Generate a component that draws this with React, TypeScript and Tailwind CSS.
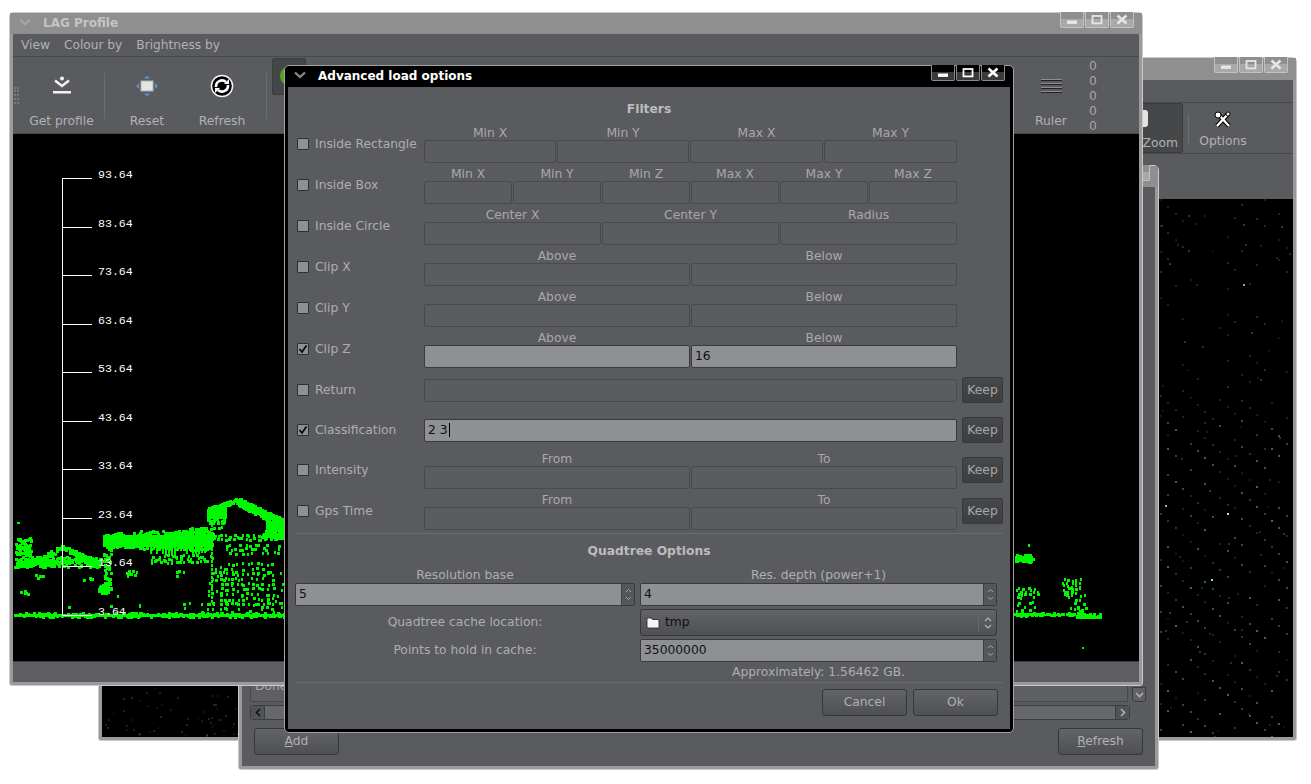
import React from "react";

function makeRng(seed: number) {
  let s = seed;
  return () => {
    s = (s * 1664525 + 1013904223) >>> 0;
    return s / 4294967296;
  };
}

const rects: string[] = [];
const rng = makeRng(42);
function r(x: number, y: number, w: number, h: number) {
  rects.push(`M${x.toFixed(0)} ${y.toFixed(0)}h${w.toFixed(0)}v${h.toFixed(0)}h${(-w).toFixed(0)}z`);
}
function blob(x1: number, y1: number, x2: number, y2: number, n: number, size = 3) {
  for (let i = 0; i < n; i++) r(x1 + rng() * (x2 - x1), y1 + rng() * (y2 - y1), size, size);
}
function band(x1: number, y1: number, x2: number, y2: number, t: number, n: number) {
  for (let i = 0; i < n; i++) {
    const k = rng();
    r(x1 + (x2 - x1) * k, y1 + (y2 - y1) * k + (rng() - 0.5) * t, 3, 3);
  }
}
function grid(x1: number, y1: number, x2: number, y2: number, dx: number, dy: number, p: number) {
  for (let y = y1; y < y2; y += dy)
    for (let x = x1; x < x2; x += dx) if (rng() < p) r(x + rng() * 2, y + rng() * 2, 2 + Math.round(rng()), 3);
}
// left canvas
r(14, 614, 270, 3);
band(14, 614, 284, 614, 4, 220);
blob(14, 537, 30, 555, 70);
blob(14, 556, 100, 566, 200);
band(28, 564, 62, 546, 5, 60);
band(62, 546, 100, 564, 5, 60);
blob(14, 590, 28, 593, 6);
blob(34, 574, 46, 578, 4);
blob(80, 577, 92, 580, 4);
r(17, 522, 3, 2);
r(103, 535, 110, 12);
blob(103, 532, 140, 547, 110);
blob(140, 530, 190, 548, 200);
blob(188, 527, 212, 549, 150);
for (let x = 150; x < 206; x += 3) r(x, 546, 2, 4 + Math.round(rng() * 6));
grid(150, 554, 212, 562, 4, 3, 0.9);
blob(103, 548, 110, 590, 46);
blob(98, 584, 107, 592, 50);
grid(122, 570, 136, 576, 3, 3, 0.7);
grid(175, 570, 184, 575, 3, 3, 0.6);
band(207, 509, 237, 500, 5, 60);
r(207, 509, 20, 10);
blob(207, 518, 224, 522, 24);
band(237, 501, 284, 523, 8, 190);
r(266, 521, 18, 11);
blob(262, 528, 284, 537, 50);
grid(208, 525, 226, 528, 4, 3, 0.8);
grid(208, 534, 284, 540, 4, 3, 0.95);
grid(225, 543, 280, 552, 4, 4, 0.7);
for (let y = 520; y < 604; y += 4) r(211, y, 2, 3);
grid(207, 562, 224, 610, 4, 4, 0.6);
grid(226, 562, 272, 603, 5, 5, 0.9);
grid(225, 570, 284, 612, 5, 6, 0.4);
grid(170, 602, 284, 612, 6, 4, 0.4);
r(117, 595, 2, 3);
r(68, 606, 3, 3);
r(139, 604, 2, 4);
r(110, 605, 3, 3);
// right canvas
r(1014, 613, 30, 3);
r(1044, 614, 20, 2);
r(1076, 616, 26, 3);
blob(1014, 612, 1100, 615, 60);
r(1015, 556, 14, 6);
blob(1015, 554, 1032, 561, 60);
r(1028, 544, 2, 3);
grid(1016, 586, 1040, 594, 4, 3, 0.85);
grid(1016, 596, 1038, 612, 4, 4, 0.65);
grid(1062, 578, 1080, 595, 4, 3, 0.9);
grid(1068, 594, 1084, 607, 5, 4, 0.7);
blob(1076, 606, 1082, 615, 8);
r(1082, 647, 2, 2);
const greenPath = rects.join("");

const starRng = makeRng(7);
const stars: { x: number; y: number; o: number }[] = [];
for (let k = -70; k < 40; k++) {
  for (let i = 0; i < 90; i++) {
    const x = 1160 + i * 7.4;
    const y = 200 + k * 24 + i * 7.4 * 0.95 + (k % 3) * 2;
    const op = starRng();
    if (x > 1293 || y < 200 || y > 738) continue;
    if (op < (y > 400 ? 0.2 : 0.6)) continue;
    stars.push({ x: Math.round(x), y: Math.round(y), o: 0.1 + (y > 420 ? 0.32 : 0.1) * starRng() });
  }
}
for (let i = 0; i < 60; i++) {
  stars.push({ x: Math.round(1160 + starRng() * 133), y: Math.round(200 + starRng() * 538), o: 0.08 + starRng() * 0.18 });
}
stars.push({ x: 1227, y: 514, o: 1 }, { x: 1211, y: 580, o: 0.9 }, { x: 1165, y: 506, o: 0.8 }, { x: 1243, y: 285, o: 0.7 });
for (let i = 0; i < 60; i++) {
  stars.push({ x: Math.round(103 + starRng() * 136), y: Math.round(688 + starRng() * 50), o: 0.05 + starRng() * 0.12 });
}

function Caret({ color }: { color: string }) {
  return (
    <svg width="12" height="8" viewBox="0 0 12 8">
      <path d="M1 1.5 6 6 11 1.5" fill="none" stroke={color} strokeWidth="2.2" />
    </svg>
  );
}

function Glyph({ kind, color }: { kind: "min" | "max" | "close"; color: string }) {
  if (kind === "min")
    return (
      <svg width="12" height="12" viewBox="0 0 12 12">
        <rect x="1" y="6.500" width="10" height="3.400" fill={color} />
      </svg>
    );
  if (kind === "max")
    return (
      <svg width="12" height="12" viewBox="0 0 12 12">
        <rect x="1.500" y="2" width="9" height="7.400" fill="none" stroke={color} strokeWidth="1.800" />
      </svg>
    );
  return (
    <svg width="12" height="12" viewBox="0 0 12 12">
      <path d="M1.500 1.500 10.500 9.500M10.500 1.500 1.500 9.500" fill="none" stroke={color} strokeWidth="2.600" />
    </svg>
  );
}

function TitleButtons({ dark }: { dark?: boolean }) {
  const kinds: ("min" | "max" | "close")[] = ["min", "max", "close"];
  return (
    <div className="flex gap-px -mt-px">
      {kinds.map((k) => (
        <div
          key={k}
          className={
            dark
              ? "w-[24px] h-[16px] flex items-center justify-center rounded-b-[2px] border-x border-b border-[#8a8a8a] bg-gradient-to-b from-[#000000] from-45% to-[#3a3a3a] to-45%"
              : "w-[24px] h-[16px] flex items-center justify-center rounded-b-[2px] border-x border-b border-[#c2c2c2] bg-gradient-to-b from-[#8f8f8f] from-45% to-[#a9a9a9] to-45%"
          }
        >
          <Glyph kind={k} color={dark ? "#ffffff" : "#e6e6e6"} />
        </div>
      ))}
    </div>
  );
}

function ToolItem({ icon, label, w }: { icon: React.ReactNode; label: string; w: string }) {
  return (
    <div className={`${w} h-full flex flex-col items-center shrink-0`}>
      <div className="h-[57px] flex items-center justify-center">{icon}</div>
      <div className="text-[12.300px] leading-[14px] text-[#b2b2b2] whitespace-nowrap">{label}</div>
    </div>
  );
}

function Sep() {
  return <div className="w-px h-[46px] mt-[16px] bg-[#6c6d70] shrink-0" />;
}

function Field({ on, children }: { on?: boolean; children?: React.ReactNode }) {
  return (
    <div
      className={
        on
          ? "h-[23px] rounded-[2px] border border-[#393a3c] bg-[#8e9093] px-[3px] text-[#101010] text-[12.300px] leading-[21px] min-w-0 text-left"
          : "h-[23px] rounded-[2px] border border-[#494a4d] bg-[#5b5c5f] min-w-0"
      }
    >
      {children}
    </div>
  );
}

function Check({ on }: { on?: boolean }) {
  return (
    <div className="w-[12px] h-[12px] shrink-0 rounded-[1px] border border-[#2e2f31] bg-[#8e9093] flex items-center justify-center">
      {on && (
        <svg width="10" height="10" viewBox="0 0 10 10">
          <path d="M1.500 5 4 8 8.500 1.500" fill="none" stroke="#0a0a0a" strokeWidth="1.800" />
        </svg>
      )}
    </div>
  );
}

function KeepButton() {
  return (
    <div className="w-[41px] h-[26px] ml-[5px] shrink-0 rounded-[2px] border border-[#38393b] bg-gradient-to-b from-[#47484a] to-[#3d3e40] flex items-center justify-center text-[12.300px] text-[#a8a8a8]">
      Keep
    </div>
  );
}

type RowProps = {
  label: string;
  on?: boolean;
  cols?: string;
  heads?: string[];
  values?: (string | null)[];
  keep?: boolean;
  top: string;
  enabled?: boolean;
  children?: React.ReactNode;
};

function FilterRow({ label, on, cols, heads, values, keep, top, enabled, children }: RowProps) {
  return (
    <div className={`flex items-center ${top}`}>
      <div className="w-[129px] pl-[2px] flex items-center gap-[6px] shrink-0">
        <Check on={on} />
        <span className="text-[12.300px] text-[#aeaeae] whitespace-nowrap">{label}</span>
      </div>
      <div className="w-[533px] shrink-0">
        {heads ? (
          <div className={`grid gap-px ${cols}`}>
            {heads.map((h, i) => (
              <div key={i} className="min-w-0">
                <div className="h-[15px] text-[12.300px] leading-[17px] text-[#a9a9a9] text-center">{h}</div>
                <Field on={enabled}>{values?.[i]}</Field>
              </div>
            ))}
          </div>
        ) : (
          children
        )}
      </div>
      {keep && <KeepButton />}
    </div>
  );
}

function Spin({ value }: { value: string }) {
  return (
    <div className="h-[23px] flex rounded-[2px] border border-[#393a3c] overflow-hidden text-left">
      <div className="flex-1 px-[3px] text-[12.300px] leading-[21px] text-[#101010] bg-[#8e9093]">{value}</div>
      <div className="w-[13px] border-l border-[#3f4042] bg-[#55565a] flex flex-col items-center justify-center gap-[3px]">
        <svg width="7" height="5" viewBox="0 0 7 5">
          <path d="M1 4 3.500 1.500 6 4" fill="none" stroke="#a4a4a4" />
        </svg>
        <svg width="7" height="5" viewBox="0 0 7 5">
          <path d="M1 1 3.500 3.500 6 1" fill="none" stroke="#a4a4a4" />
        </svg>
      </div>
    </div>
  );
}

function PushButton({ children, w, className = "" }: { children: React.ReactNode; w: string; className?: string }) {
  return (
    <div
      className={`${w} h-[27px] rounded-[3px] border border-[#36373a] bg-gradient-to-b from-[#636467] to-[#4f5053] flex items-center justify-center text-[12.300px] text-[#b0b0b0] ${className}`}
    >
      {children}
    </div>
  );
}

const WINDOW =
  "absolute rounded-t-[5px] rounded-b-[3px] border border-[#c9c9c9] bg-[#9a9a9a] flex flex-col px-[3px] pb-[3px]";

function BackWindow() {
  return (
    <div className={`${WINDOW} left-[98px] top-[57px] w-[1199px] h-[684px]`}>
      <div className="h-[22px] shrink-0 flex justify-end pr-[8px] bg-[#8f8f8f] -mx-[3px]">
        <TitleButtons />
      </div>
      <div className="h-[23px] shrink-0 bg-[#5a5b5e] border-b border-[#47484a]" />
      <div className="h-[51px] shrink-0 bg-[#5a5b5e] border-b border-[#47484a] flex justify-end pr-[36px]">
        <div className="w-[44px] h-[50px] rounded-[2px] bg-[#464749] border border-[#3b3c3e] flex flex-col items-end pr-[4px] text-[12.300px] text-[#b2b2b2] relative">
          <div className="absolute left-[3px] top-[6px] w-[5px] h-[17px] rounded-r-[3px] bg-[#e4e4e4]" />
          <span className="mt-[30px]">Zoom</span>
        </div>
        <div className="w-px h-[30px] mt-[12px] ml-[5px] bg-[#6c6d70]" />
        <div className="w-[68px] flex flex-col items-center">
          <svg className="mt-[8px]" width="18" height="18" viewBox="0 0 18 18">
            <path d="M3 15 14 3M4 3l11 12" stroke="#000" strokeWidth="4.500" />
            <path d="M3 15 14 3M5 4l10 11" stroke="#fff" strokeWidth="2.400" />
            <circle cx="4" cy="4" r="3" fill="#fff" stroke="#000" />
            <circle cx="14" cy="3" r="2" fill="#fff" stroke="#000" />
          </svg>
          <span className="text-[12.300px] leading-[14px] text-[#b2b2b2] mt-[5px]">Options</span>
        </div>
      </div>
      <div className="h-[45px] shrink-0 bg-[#5a5b5e]" />
      <div className="flex-1 bg-black relative overflow-hidden">
        <svg className="absolute inset-0 w-full h-full" viewBox="102 200 1191 538">
          {stars.map((s, i) => (
            <rect key={i} x={s.x} y={s.y} width={2} height={2} fill="#a8ecea" opacity={s.o} />
          ))}
        </svg>
      </div>
    </div>
  );
}

function MiddleWindow() {
  return (
    <div className={`${WINDOW} left-[238px] top-[165px] w-[921px] h-[605px]`}>
      <div className="h-[21px] shrink-0 bg-[#8f8f8f] -mx-[3px] flex justify-end pr-[8px]">
        <TitleButtons />
      </div>
      <div className="flex-1 bg-[#5a5b5e] flex flex-col min-h-0 pl-[8px] pr-[8px] relative">
        <div className="flex-1 flex min-h-0">
          <div className="flex-1 flex flex-col justify-end min-w-0">
            <div className="h-[24px] border border-[#47484a] bg-[#5e5f62] text-[12.300px] leading-[14px] text-[#a9a9a9] pl-[4px] mr-[4px] overflow-hidden">
              Done
            </div>
          </div>
          <div className="w-[14px] mr-[1px] flex flex-col justify-end">
            <div className="h-[15px] rounded-b-[3px] border border-[#3c3d3f] bg-[#606164] flex items-center justify-center">
              <svg width="9" height="6" viewBox="0 0 9 6">
                <path d="M1 1 4.500 4.500 8 1" fill="none" stroke="#b0b0b0" strokeWidth="1.600" />
              </svg>
            </div>
          </div>
        </div>
        <div className="mt-[3px] h-[15px] mr-[17px] flex rounded-[3px] border border-[#3c3d3f] bg-[#67686b] shrink-0">
          <div className="w-[14px] border-r border-[#3c3d3f] bg-[#525356] flex items-center justify-center">
            <svg width="6" height="9" viewBox="0 0 6 9">
              <path d="M5 1 1.500 4.500 5 8" fill="none" stroke="#111" strokeWidth="1.600" />
            </svg>
          </div>
          <div className="flex-1" />
          <div className="w-[14px] border-l border-[#3c3d3f] bg-[#525356] flex items-center justify-center">
            <svg width="6" height="9" viewBox="0 0 6 9">
              <path d="M1 1 4.500 4.500 1 8" fill="none" stroke="#b0b0b0" strokeWidth="1.600" />
            </svg>
          </div>
        </div>
        <div className="shrink-0 mt-[8px] mb-[11px] flex justify-between px-[4px]">
          <PushButton w="w-[85px]">
            <span>
              <span className="underline">A</span>dd
            </span>
          </PushButton>
          <PushButton w="w-[85px]">
            <span>
              <span className="underline">R</span>efresh
            </span>
          </PushButton>
        </div>
      </div>
    </div>
  );
}

function ProfileCanvas() {
  const ticks = ["93.64", "83.64", "73.64", "63.64", "53.64", "43.64", "33.64", "23.64", "13.64", "3.64"];
  return (
    <div className="flex-1 bg-black relative overflow-hidden">
      <svg className="absolute inset-0 w-full h-full" viewBox="13 134 1126 527">
        <path d={greenPath} fill="#00f800" />
        <path d="M62.500 178V615" stroke="#fff" strokeWidth="1" />
        {ticks.map((t, i) => {
          const y = Math.round(178 + i * 48.55) + 0.5;
          return (
            <g key={t}>
              <path d={`M62 ${y}H92`} stroke="#fff" strokeWidth="1" />
              <text x="98" y={y - 1} fill="#fff" fontSize="11.600" fontFamily="'Liberation Mono', monospace">
                {t}
              </text>
            </g>
          );
        })}
      </svg>
    </div>
  );
}

function FrontWindow() {
  return (
    <div className={`${WINDOW} left-[9px] top-[12px] w-[1134px] h-[674px]`}>
      <div className="h-[21px] shrink-0 bg-[#8f8f8f] -mx-[3px] flex items-start pl-[9px] pr-[8px]">
        <div className="mt-[5px]">
          <Caret color="#a6a6a6" />
        </div>
        <span className="ml-[12px] mt-[1px] text-[12px] font-bold text-[#c4c4c4]">LAG Profile</span>
        <div className="ml-auto">
          <TitleButtons />
        </div>
      </div>
      <div className="h-[23px] shrink-0 bg-[#5a5b5e] border-b border-[#47484a] flex items-center gap-[14px] pl-[8px] text-[12.200px] text-[#b2b2b2]">
        <span>View</span>
        <span>Colour by</span>
        <span>Brightness by</span>
      </div>
      <div className="h-[77px] shrink-0 bg-[#5a5b5e] border-b border-[#47484a] flex relative">
        <div className="w-[5px] ml-[1px] mt-[30px] h-[17px] border-l-2 border-r-2 border-dotted border-[#77787b] shrink-0" />
        <ToolItem
          w="w-[85px]"
          label="Get profile"
          icon={
            <svg width="20" height="20" viewBox="0 0 20 20">
              <circle cx="10" cy="2.500" r="2" fill="#f2f2f2" />
              <path d="M3 4.500 10 10 17 4.500" fill="none" stroke="#f2f2f2" strokeWidth="2.500" />
              <rect x="1" y="15" width="18" height="2.500" fill="#f2f2f2" />
            </svg>
          }
        />
        <Sep />
        <ToolItem
          w="w-[84px]"
          label="Reset"
          icon={
            <svg width="24" height="24" viewBox="0 0 24 24">
              <rect x="6" y="7" width="12" height="10" fill="#e6e6e0" stroke="#aeb4c0" />
              <path d="M12 1.500 15 4.500H9zM12 22.500 9 19.500h6zM1 12 4 9v6zM23 12l-3-3v6z" fill="#5a90e0" />
            </svg>
          }
        />
        <ToolItem
          w="w-[66px]"
          label="Refresh"
          icon={
            <svg width="24" height="24" viewBox="0 0 24 24">
              <circle cx="12" cy="12" r="11.300" fill="#f4f4f4" />
              <circle cx="12" cy="12" r="9.800" fill="#000" />
              <path d="M6 13a6 6 0 0 1 10-5M18 11a6 6 0 0 1-10 5" fill="none" stroke="#fff" strokeWidth="2.600" />
              <path d="M14 10h5V5zM10 14H5v5z" fill="#fff" />
            </svg>
          }
        />
        <div className="w-[11px] shrink-0" />
        <Sep />
        <div className="ml-[5px] w-[34px] h-[37px] mt-px rounded-[2px] bg-[#454648] border border-[#3b3c3e] overflow-hidden shrink-0">
          <div className="w-[20px] h-[20px] rounded-full bg-[#55a520] ml-[7px] mt-[7px]" />
        </div>
        <div className="ml-auto w-[60px] shrink-0">
          <ToolItem
            w="w-[60px]"
            label="Ruler"
            icon={
              <svg width="21" height="16" viewBox="0 0 21 16">
                <path d="M0 1.500H21M0 5.500H21M0 9.500H21M0 13.500H21" stroke="#8e8e8e" strokeWidth="1" />
                <path d="M0 2.500H21M0 6.500H21M0 10.500H21M0 14.500H21" stroke="#222" strokeWidth="1" />
              </svg>
            }
          />
        </div>
        <div className="w-[49px] ml-[8px] mr-px shrink-0 pt-[2px] text-[12.300px] leading-[15px] text-[#a8a8a8]">
          <div>0</div>
          <div>0</div>
          <div>0</div>
          <div>0</div>
          <div>0</div>
        </div>
      </div>
      <ProfileCanvas />
      <div className="h-[21px] shrink-0 bg-[#5d5e61] border-t border-[#3f4042]" />
    </div>
  );
}

function Dialog() {
  const two = "grid-cols-[266px_266px]";
  const four = "grid-cols-[132px_132px_133px_133px]";
  const six = "grid-cols-[88px_88px_88px_88px_88px_88px]";
  const three = "grid-cols-[177px_177px_177px]";
  return (
    <div className="absolute left-[284px] top-[65px] w-[730px] h-[668px] rounded-[5px] border border-[#a2a2a2] bg-black flex flex-col px-[3px] pb-[3px]">
      <div className="h-[21px] shrink-0 flex items-start pl-[6px] pr-[5px]">
        <div className="mt-[5px]">
          <Caret color="#8c8c8c" />
        </div>
        <span className="ml-[12px] mt-[1px] text-[12px] font-bold text-white">Advanced load options</span>
        <div className="ml-auto">
          <TitleButtons dark />
        </div>
      </div>
      <div className="flex-1 bg-[#5a5b5e] px-[7px] min-h-0">
        <div className="mt-[15px] h-[14px] text-[12.300px] leading-[14px] font-bold text-center text-[#bcbcbc]">Filters</div>
        <FilterRow top="mt-[9px]" label="Inside Rectangle" cols={four} heads={["Min X", "Min Y", "Max X", "Max Y"]} />
        <FilterRow top="mt-[3px]" label="Inside Box" cols={six} heads={["Min X", "Min Y", "Min Z", "Max X", "Max Y", "Max Z"]} />
        <FilterRow top="mt-[3px]" label="Inside Circle" cols={three} heads={["Center X", "Center Y", "Radius"]} />
        <FilterRow top="mt-[3px]" label="Clip X" cols={two} heads={["Above", "Below"]} />
        <FilterRow top="mt-[3px]" label="Clip Y" cols={two} heads={["Above", "Below"]} />
        <FilterRow top="mt-[3px]" label="Clip Z" on cols={two} heads={["Above", "Below"]} enabled values={[null, "16"]} />
        <FilterRow top="mt-[9px]" label="Return" keep>
          <Field />
        </FilterRow>
        <FilterRow top="mt-[14px]" label="Classification" on keep>
          <Field on>
            <span className="border-r border-black pr-px">2 3</span>
          </Field>
        </FilterRow>
        <FilterRow top="mt-[8px]" label="Intensity" cols={two} heads={["From", "To"]} keep />
        <FilterRow top="mt-[3px]" label="Gps Time" cols={two} heads={["From", "To"]} keep />
        <div className="mt-[3px] h-px bg-[#6a6b6e]" />
        <div className="mt-[10px] h-[14px] text-[12.300px] leading-[14px] font-bold text-center text-[#bcbcbc]">Quadtree Options</div>
        <div className="mt-[10px] grid grid-cols-[340px_357px] gap-x-[5px] text-[12.300px] text-[#aeaeae] text-center">
          <div className="h-[15px] leading-[14px]">Resolution base</div>
          <div className="h-[15px] leading-[14px]">Res. depth (power+1)</div>
          <Spin value="5" />
          <Spin value="4" />
          <div className="mt-[3px] h-[27px] leading-[27px]">Quadtree cache location:</div>
          <div className="mt-[3px] h-[27px] rounded-[3px] border border-[#36373a] bg-gradient-to-b from-[#626366] to-[#4f5053] flex items-center pl-[5px] text-[#101010] text-left">
            <svg width="14" height="12" viewBox="0 0 14 12">
              <path d="M1 2.500Q1 1 2.500 1H5l1.500 1.500h5Q13 2.500 13 4v5.500Q13 11 11.500 11h-9Q1 11 1 9.500z" fill="#f4f4f4" stroke="#222" strokeWidth="0.800" />
            </svg>
            <span className="ml-[5px]">tmp</span>
            <div className="ml-auto h-[18px] w-[18px] border-l border-[#67686b] flex flex-col items-center justify-center gap-[2px]">
              <svg width="8" height="5" viewBox="0 0 8 5">
                <path d="M1 4 4 1 7 4" fill="none" stroke="#b5b5b5" strokeWidth="1.200" />
              </svg>
              <svg width="8" height="5" viewBox="0 0 8 5">
                <path d="M1 1 4 4 7 1" fill="none" stroke="#b5b5b5" strokeWidth="1.200" />
              </svg>
            </div>
          </div>
          <div className="mt-[3px] h-[23px] leading-[23px]">Points to hold in cache:</div>
          <div className="mt-[3px]">
            <Spin value="35000000" />
          </div>
          <div />
          <div className="mt-[3px] h-[14px] leading-[14px]">Approximately: 1.56462 GB.</div>
        </div>
        <div className="mt-[3px] h-px bg-[#6a6b6e]" />
        <div className="mt-[6px] flex justify-end gap-[6px] pr-[5px]">
          <PushButton w="w-[85px]">Cancel</PushButton>
          <PushButton w="w-[85px]">Ok</PushButton>
        </div>
      </div>
    </div>
  );
}

export default function App() {
  return (
    <div className="relative w-[1311px] h-[784px] bg-white overflow-hidden font-['DejaVu_Sans',sans-serif]">
      <BackWindow />
      <MiddleWindow />
      <FrontWindow />
      <Dialog />
    </div>
  );
}
